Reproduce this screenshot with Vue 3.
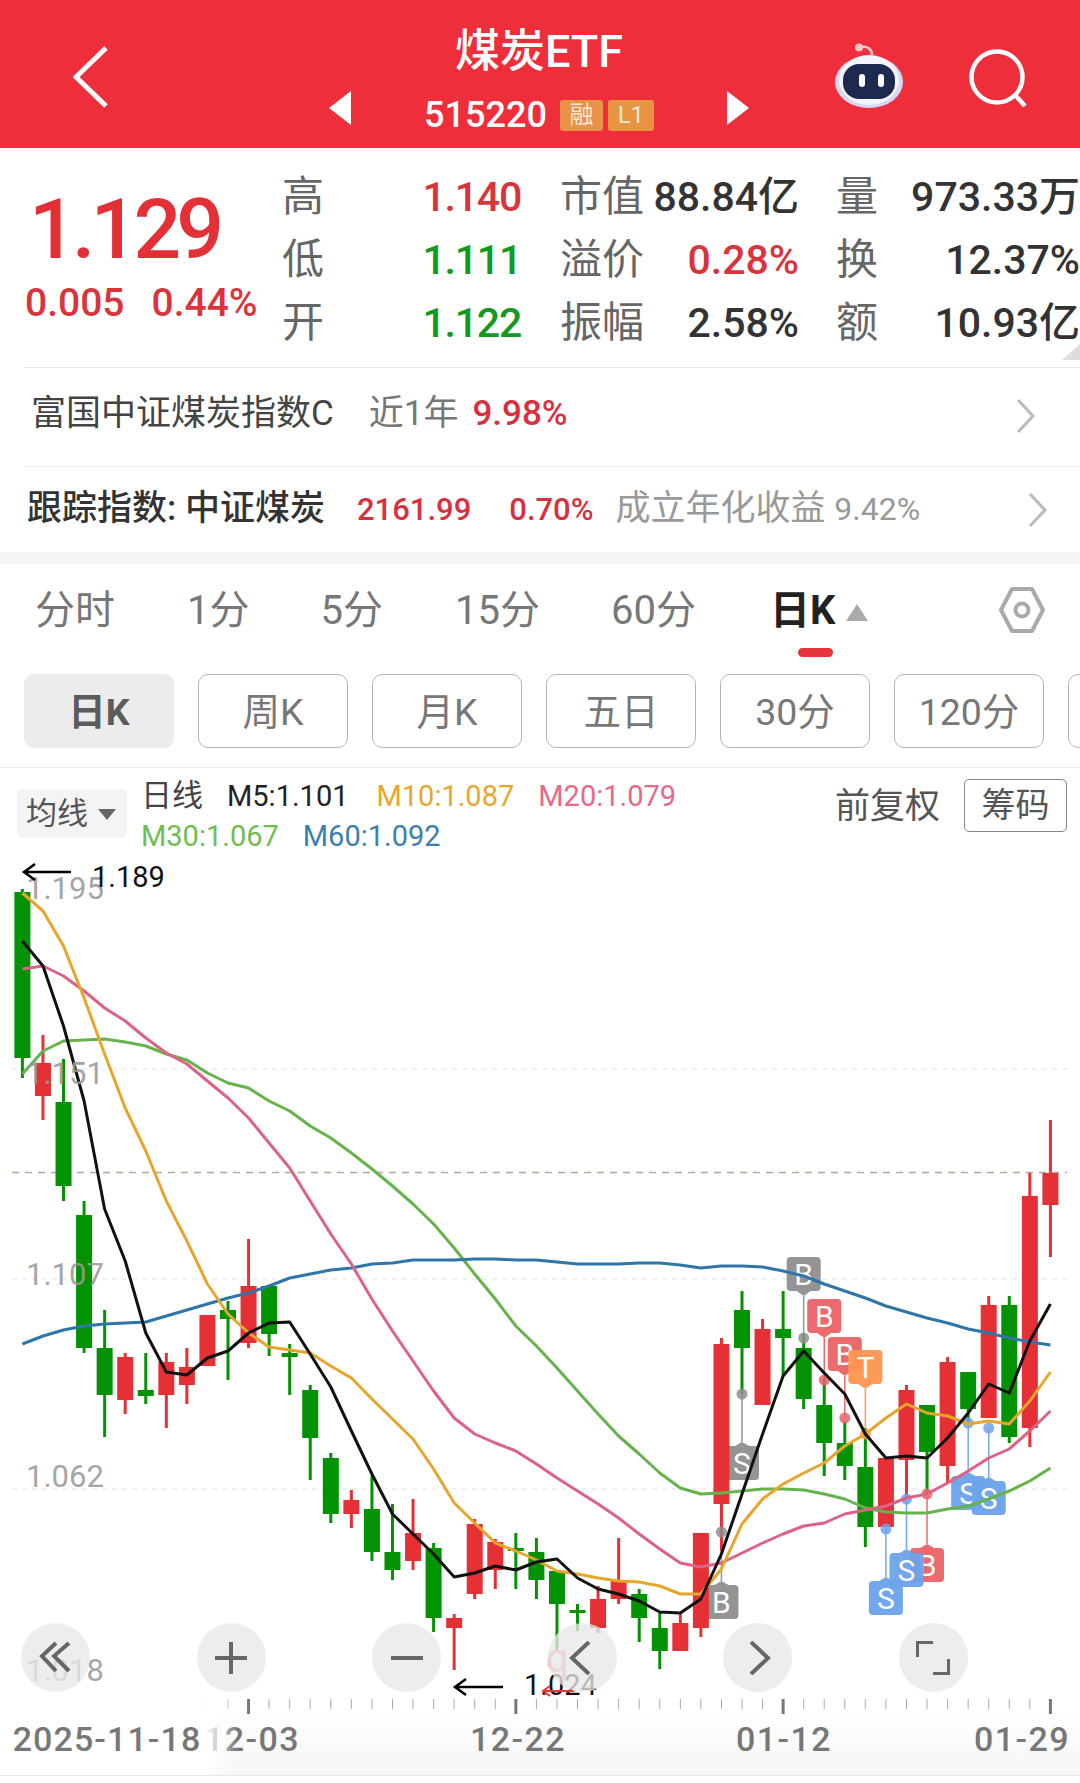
<script setup>
const stats = [
  ['高', '1.140', 'up', '市值', '88.84亿', '', '量', '973.33万', ''],
  ['低', '1.111', 'down', '溢价', '0.28%', 'up', '换', '12.37%', ''],
  ['开', '1.122', 'down', '振幅', '2.58%', '', '额', '10.93亿', '']
]
const tabs = ['分时', '1分', '5分', '15分', '60分']
const periods = ['周K', '月K', '五日', '30分', '120分', '']

// y coordinates are page pixels, the svg starts at 859
const top = 859
const step = 20.56
const xAt = (i) => 22.4 + step * i

// [red?, body top, body bottom, wick top, wick bottom]
const raw = [
  [0, 891, 1057, 888, 1077], [1, 1062, 1095, 1034, 1119], [0, 1101, 1185, 1058, 1200], [0, 1214, 1347, 1200, 1352],
  [0, 1347, 1394, 1309, 1436], [1, 1356, 1399, 1352, 1413], [0, 1389, 1395, 1352, 1403], [1, 1361, 1394, 1352, 1427],
  [1, 1366, 1384, 1347, 1403], [1, 1314, 1365, 1314, 1365], [0, 1309, 1318, 1300, 1379], [1, 1285, 1342, 1238, 1347],
  [0, 1285, 1333, 1285, 1355], [0, 1352, 1356, 1343, 1394], [0, 1389, 1437, 1384, 1479], [0, 1457, 1513, 1452, 1522],
  [1, 1499, 1513, 1489, 1527], [0, 1508, 1551, 1475, 1560], [0, 1551, 1569, 1503, 1579], [1, 1532, 1560, 1498, 1569],
  [0, 1547, 1617, 1542, 1631], [1, 1617, 1627, 1613, 1669], [1, 1523, 1593, 1518, 1598], [1, 1541, 1569, 1538, 1588],
  [0, 1547, 1550, 1532, 1588], [0, 1551, 1579, 1537, 1598], [0, 1570, 1603, 1570, 1650], [0, 1609, 1612, 1603, 1630],
  [1, 1598, 1627, 1585, 1632], [1, 1580, 1598, 1537, 1603], [0, 1593, 1617, 1588, 1641], [0, 1627, 1650, 1612, 1668],
  [1, 1622, 1650, 1612, 1650], [1, 1532, 1627, 1532, 1636], [1, 1343, 1503, 1337, 1550], [0, 1309, 1347, 1290, 1393],
  [1, 1328, 1404, 1318, 1404], [0, 1328, 1337, 1290, 1375], [0, 1347, 1398, 1333, 1408], [0, 1404, 1442, 1377, 1475],
  [0, 1442, 1465, 1420, 1479], [0, 1466, 1526, 1427, 1546], [1, 1457, 1526, 1457, 1526], [1, 1389, 1459, 1384, 1497],
  [0, 1404, 1451, 1404, 1493], [1, 1361, 1465, 1356, 1482], [0, 1371, 1408, 1371, 1422], [1, 1304, 1417, 1295, 1417],
  [0, 1304, 1436, 1295, 1442], [1, 1195, 1427, 1172, 1446], [1, 1172, 1204, 1119, 1256]
]
const candles = raw.map((c, i) => ({
  x: xAt(i),
  color: c[0] ? '#e53035' : '#039203',
  y: c[1] - top,
  h: c[2] - c[1],
  w1: c[3] - top,
  w2: c[4] - top
}))

const m5 = [940, 965, 1025, 1100, 1208, 1260, 1332, 1371, 1374, 1357, 1350, 1332, 1322, 1321, 1353, 1386, 1430, 1473, 1513, 1533, 1553, 1576, 1572, 1565, 1569, 1561, 1558, 1577, 1588, 1593, 1600, 1611, 1612, 1598, 1553, 1493, 1433, 1375, 1350, 1372, 1393, 1433, 1457, 1455, 1457, 1437, 1412, 1383, 1392, 1340, 1303]
const m10 = [892, 910, 945, 997, 1053, 1107, 1150, 1200, 1240, 1283, 1313, 1332, 1346, 1349, 1352, 1365, 1377, 1398, 1418, 1438, 1468, 1502, 1522, 1542, 1550, 1559, 1570, 1573, 1577, 1580, 1581, 1585, 1593, 1593, 1568, 1523, 1498, 1483, 1472, 1462, 1445, 1433, 1417, 1403, 1412, 1415, 1423, 1420, 1423, 1400, 1371]
const m20 = [968, 965, 975, 990, 1007, 1020, 1037, 1052, 1063, 1080, 1097, 1117, 1142, 1167, 1200, 1233, 1263, 1298, 1330, 1360, 1390, 1417, 1433, 1442, 1450, 1463, 1477, 1490, 1503, 1517, 1533, 1548, 1562, 1566, 1562, 1552, 1542, 1533, 1525, 1522, 1513, 1509, 1505, 1497, 1493, 1482, 1470, 1457, 1448, 1430, 1410]
const m30 = [1073, 1050, 1040, 1039, 1038, 1041, 1045, 1053, 1059, 1072, 1082, 1087, 1100, 1110, 1125, 1137, 1152, 1168, 1185, 1203, 1223, 1247, 1273, 1298, 1325, 1345, 1367, 1390, 1413, 1435, 1453, 1472, 1487, 1493, 1492, 1490, 1488, 1488, 1489, 1493, 1498, 1507, 1511, 1512, 1512, 1508, 1505, 1498, 1490, 1480, 1467]
const m60 = [1343, 1335, 1329, 1325, 1323, 1322, 1321, 1315, 1309, 1303, 1297, 1292, 1285, 1277, 1273, 1269, 1267, 1263, 1262, 1259, 1259, 1259, 1258, 1258, 1259, 1259, 1261, 1263, 1263, 1263, 1262, 1262, 1264, 1267, 1265, 1265, 1266, 1270, 1275, 1283, 1290, 1297, 1305, 1311, 1317, 1322, 1328, 1332, 1337, 1341, 1344]
const pts = (arr) => arr.map((y, i) => `${xAt(i).toFixed(1)},${y - top}`).join(' ')
const lines = [
  { c: '#66b34c', p: pts(m30) },
  { c: '#2f76a8', p: pts(m60) },
  { c: '#dd6288', p: pts(m20) },
  { c: '#e8a52c', p: pts(m10) },
  { c: '#111', p: pts(m5) }
]

const grid = [1068, 1278, 1488]
const priceLabels = [['1.195', 898], ['1.151', 1083], ['1.107', 1284], ['1.062', 1486], ['1.018', 1680]]

// dir 1: box above the dot, dir -1: box below the dot
const GREY = '#8f8f8f'
const RED = '#ea6367'
const ORANGE = '#ff9550'
const BLUE = '#6ba3ec'
const marks = [
  { i: 34, t: 'B', c: GREY, box: 1584, dot: 1531, dir: -1 },
  { i: 35, t: 'S', c: GREY, box: 1445, dot: 1393, dir: -1 },
  { i: 38, t: 'B', c: GREY, box: 1256, dot: 1337, dir: 1 },
  { i: 39, t: 'B', c: RED, box: 1298, dot: 1379, dir: 1 },
  { i: 40, t: 'B', c: RED, box: 1336, dot: 1417, dir: 1 },
  { i: 41, t: 'T', c: ORANGE, box: 1349, dot: 1433, dir: 1 },
  { i: 44, t: 'B', c: RED, box: 1547, dot: 1493, dir: -1 },
  { i: 43, t: 'S', c: BLUE, box: 1552, dot: 1498, dir: -1 },
  { i: 42, t: 'S', c: BLUE, box: 1580, dot: 1528, dir: -1 },
  { i: 46, t: 'S', c: BLUE, box: 1475, dot: 1422, dir: -1 },
  { i: 47, t: 'S', c: BLUE, box: 1480, dot: 1427, dir: -1 }
].map((m) => {
  const x = xAt(m.i)
  const y = m.box - top
  const tip = m.dir > 0 ? y + 39 : y - 4
  const foot = m.dir > 0 ? y + 34 : y
  return {
    ...m,
    x,
    y,
    dotY: m.dot - top,
    lineFrom: tip,
    arrow: `${x - 7},${foot} ${x},${tip} ${x + 7},${foot}`
  }
})

const ticks = raw.map((c, i) => ({ x: xAt(i), major: i === 11 || i === 24 || i === 37 || i === 50 }))
</script>

<template>
  <div class="page">
    <header class="head">
      <svg class="back" viewBox="0 0 36 62"><path d="M33 2 3 31l30 29" /></svg>
      <div class="title-wrap">
        <i class="tri tri-left"></i>
        <div class="title">
          <div class="name">煤炭ETF</div>
          <div class="code">
            <span>515220</span>
            <b class="tag">融</b>
            <b class="tag tag-l">L1</b>
          </div>
        </div>
        <i class="tri tri-right"></i>
      </div>
      <svg class="robot" viewBox="0 0 70 66">
        <path d="M38 12c0-6-5-9-10-8" fill="none" stroke="#f3c3c8" stroke-width="2.5" />
        <circle cx="25" cy="4.5" r="4" fill="#f3c3c8" />
        <ellipse cx="35" cy="39" rx="34" ry="26" fill="#d5d9f6" />
        <ellipse cx="35" cy="37" rx="30" ry="25" fill="#f4f4fd" />
        <rect x="9" y="21" width="52" height="35" rx="16" fill="#1c2a50" />
        <rect x="25" y="31" width="6" height="13" rx="3" fill="#fff" />
        <rect x="44" y="31" width="6" height="13" rx="3" fill="#fff" />
      </svg>
      <svg class="search" viewBox="0 0 58 58"><circle cx="28" cy="28" r="25.5" /><path d="M47 47l9 10" /></svg>
    </header>

    <section class="quote">
      <div class="price">
        <div class="big">1.129</div>
        <div class="chg"><span>0.005</span><span>0.44%</span></div>
      </div>
      <div class="stats">
        <template v-for="row in stats" :key="row[0]">
          <span class="lab">{{ row[0] }}</span>
          <span class="val first-val" :class="row[2]">{{ row[1] }}</span>
          <span class="lab">{{ row[3] }}</span>
          <span class="val" :class="row[5]">{{ row[4] }}</span>
          <span class="lab">{{ row[6] }}</span>
          <span class="val" :class="row[8]">{{ row[7] }}</span>
        </template>
      </div>
      <i class="corner"></i>
    </section>

    <div class="info first">
      <span class="fund">富国中证煤炭指数C</span>
      <span class="near">近1年</span>
      <span class="pct">9.98%</span>
      <svg class="chev" viewBox="0 0 20 34"><path d="M2 1l15 16L2 33" /></svg>
    </div>
    <div class="info second">
      <span class="track">跟踪指数: 中证煤炭</span>
      <span class="idx">2161.99</span>
      <span class="idx idx2">0.70%</span>
      <span class="since">成立年化收益 <em>9.42%</em></span>
      <svg class="chev" viewBox="0 0 20 34"><path d="M2 1l15 16L2 33" /></svg>
    </div>
    <div class="band"></div>

    <nav class="tabs">
      <span v-for="t in tabs" :key="t" class="tab">{{ t }}</span>
      <span class="tab on">日K<i></i></span>
      <svg class="gear" viewBox="0 0 46 46">
        <path d="M13 2h20l11 21-11 21H13L2 23z" />
        <circle cx="23" cy="23" r="6.5" />
      </svg>
    </nav>

    <div class="periods">
      <span class="period active">日K</span>
      <span v-for="(p, n) in periods" :key="n" class="period">{{ p }}</span>
    </div>

    <div class="legend">
      <div class="chip">均线<i></i></div>
      <div class="ma">
        <div>
          <span class="ma-t">日线</span><span class="c5">M5:1.101</span><span class="c10">M10:1.087</span><span class="c20">M20:1.079</span>
        </div>
        <div><span class="c30">M30:1.067</span><span class="c60">M60:1.092</span></div>
      </div>
      <span class="adj">前复权</span>
      <span class="chou">筹码</span>
    </div>

    <div class="chart">
      <svg class="plot" width="1080" height="839" viewBox="0 0 1080 839">
        <line v-for="g in grid" :key="g" x1="12" x2="1067" :y1="g - top" :y2="g - top" class="grid" />
        <line x1="12" x2="1067" y1="312.5" y2="312.5" class="now" />

        <g v-for="m in marks" :key="m.i" class="mark">
          <line :x1="m.x" :x2="m.x" :y1="m.lineFrom" :y2="m.dotY" :stroke="m.c" stroke-width="1.5" />
          <rect :x="m.x - 17" :y="m.y" width="34" height="34" rx="4" :fill="m.c" />
          <polygon :points="m.arrow" :fill="m.c" />
          <text :x="m.x" :y="m.y + 28" class="mt">{{ m.t }}</text>
        </g>

        <g v-for="(c, n) in candles" :key="n">
          <rect :x="c.x - 1.5" :y="c.w1" width="3" :height="c.w2 - c.w1" :fill="c.color" />
          <rect :x="c.x - 8" :y="c.y" width="16" :height="c.h" :fill="c.color" />
        </g>
        <circle v-for="m in marks" :key="'d' + m.i" :cx="m.x" :cy="m.dotY" r="5.5" :fill="m.c" opacity=".85" />

        <polyline v-for="l in lines" :key="l.c" :points="l.p" fill="none" :stroke="l.c" stroke-width="3" stroke-linejoin="round" />

        <text v-for="l in priceLabels" :key="l[0]" x="26" :y="l[1] - top" class="pl">{{ l[0] }}</text>

        <path d="M71 12H24m11-8-11 8 11 8" class="arr" />
        <text x="92" y="27" class="ext">1.189</text>
        <path d="M503 827h-48m11-8-11 8 11 8" class="arr" />
        <text x="524" y="835" class="ext">1.024</text>
        <text x="546" y="812" class="ghost">q</text>
        <path d="M574 831h-31m7-5-7 5 7 5" class="ghost-arr" />
      </svg>

      <div class="tools">
        <button class="tool"><svg viewBox="0 0 34 34"><path d="M17 2 3 15l14 15M30 2 15 15l15 15" /></svg></button>
        <button class="tool"><svg viewBox="0 0 34 34"><path d="M17 1v32M1 17h32" /></svg></button>
        <button class="tool"><svg viewBox="0 0 34 34"><path d="M1 17h32" /></svg></button>
        <button class="tool"><svg viewBox="0 0 34 34"><path d="M24 1 7 17l17 16" /></svg></button>
        <button class="tool"><svg viewBox="0 0 34 34"><path d="M10 1l17 16-17 16" /></svg></button>
        <button class="tool"><svg viewBox="0 0 34 34"><path d="M17 1H1v15M33 18v15H17" /></svg></button>
      </div>
    </div>

    <svg class="axis" width="1080" height="76" viewBox="0 0 1080 76">
      <defs>
        <linearGradient id="fade">
          <stop offset="0" stop-color="#fff" />
          <stop offset=".86" stop-color="#fff" />
          <stop offset="1" stop-color="#fff" stop-opacity="0" />
        </linearGradient>
      </defs>
      <rect v-for="t in ticks" :key="t.x" :x="t.x - (t.major ? 1.5 : .5)" y="0" :width="t.major ? 3 : 1" :height="t.major ? 15 : 10" :fill="t.major ? '#777' : '#aaa'" />
      <text x="252" y="52" class="dt">12-03</text>
      <text x="518" y="52" class="dt">12-22</text>
      <text x="784" y="52" class="dt">01-12</text>
      <text x="1022" y="52" class="dt">01-29</text>
      <rect x="0" y="0" width="238" height="76" fill="url(#fade)" />
      <text x="107" y="52" class="dt first-date">2025-11-18</text>
    </svg>
    <div class="foot"></div>
  </div>
</template>

<style scoped>
.page {
  width: 1080px;
  height: 1783px;
  overflow: hidden;
  background: #fff;
  font-family: Roboto, "Noto Sans CJK SC", sans-serif;
  color: #333;
}
i, em {
  font-style: normal;
}

.head {
  height: 148px;
  background: #ee2f3b;
  color: #fff;
  display: flex;
  align-items: flex-start;
  position: relative;
}
.back {
  width: 36px;
  height: 62px;
  margin: 46px 0 0 73px;
  fill: none;
  stroke: #fff;
  stroke-width: 5;
}
.title-wrap {
  display: flex;
  align-items: center;
  width: 420px;
  margin: 0 0 0 220px;
  justify-content: space-between;
}
.tri {
  width: 0;
  height: 0;
  border-top: 17px solid transparent;
  border-bottom: 17px solid transparent;
  margin-top: 78px;
}
.tri-left {
  border-right: 22px solid #fff;
}
.tri-right {
  border-left: 22px solid #fff;
}
.title {
  text-align: center;
  padding-top: 24px;
}
.name {
  font-size: 45px;
  font-weight: 500;
  line-height: 56px;
}
.code {
  display: flex;
  align-items: center;
  gap: 5px;
  font-size: 36px;
  font-weight: 500;
  line-height: 44px;
  margin-top: 13px;
}
.code span {
  margin-right: 8px;
}
.tag {
  width: 43px;
  height: 31px;
  line-height: 31px;
  font-size: 24px;
  font-weight: 400;
  background: #e8924a;
  border-radius: 3px;
  text-align: center;
  color: #fbe9d6;
}
.tag-l {
  width: 46px;
  background: #e99440;
}
.robot {
  width: 70px;
  height: 66px;
  margin: 43px 0 0 85px;
}
.search {
  width: 58px;
  height: 58px;
  margin: 49px 0 0 65px;
  fill: none;
  stroke: #fff;
  stroke-width: 4.5;
}

.quote {
  display: flex;
  height: 219px;
  position: relative;
}
.price {
  width: 282px;
  padding: 40px 0 0 25px;
  box-sizing: border-box;
}
.big {
  font-size: 84px;
  font-weight: 500;
  line-height: 84px;
  color: #e32f36;
  letter-spacing: -4.8px;
  margin-left: 4px;
}
.chg {
  display: flex;
  gap: 27px;
  margin-top: 9px;
  font-size: 39px;
  font-weight: 500;
  line-height: 44px;
  color: #d9343c;
}
.stats {
  display: grid;
  grid-template-columns: 40px 199px 123px 155px 79px 202px;
  grid-auto-rows: 63px;
  margin-top: 14px;
  align-items: baseline;
}
.lab {
  font-size: 42px;
  color: #666;
  text-align: right;
  white-space: nowrap;
}
.val {
  font-size: 41px;
  font-weight: 500;
  color: #333;
  text-align: right;
  white-space: nowrap;
}
.first-val {
  letter-spacing: -1.2px;
}
.val.up {
  color: #d9343c;
}
.val.down {
  color: #129a1e;
}
.corner {
  position: absolute;
  right: 0;
  top: 196px;
  border-left: 18px solid transparent;
  border-bottom: 16px solid #ddd;
}

.info {
  display: flex;
  align-items: baseline;
  position: relative;
  margin-left: 24px;
  box-sizing: border-box;
  line-height: 44px;
}
.info.first {
  height: 99px;
  border-top: 1px solid #e6e6e6;
  padding: 24px 0 0 7px;
}
.info.second {
  height: 86px;
  border-top: 1px solid #f2f2f2;
  padding: 20px 0 0 3px;
}
.fund {
  font-size: 35px;
  color: #444;
}
.near {
  font-size: 35px;
  color: #777;
  margin-left: 35px;
}
.pct {
  font-size: 35px;
  font-weight: 500;
  color: #d8303f;
  margin-left: 14px;
}
.track {
  font-size: 35px;
  font-weight: 500;
  color: #333;
}
.idx {
  font-size: 31px;
  font-weight: 500;
  color: #d8303f;
  margin-left: 32px;
}
.idx2 {
  margin-left: 38px;
}
.since {
  font-size: 35px;
  color: #999;
  margin-left: 22px;
}
.since em {
  font-size: 32px;
}
.chev {
  position: absolute;
  right: 44px;
  top: 31px;
  width: 20px;
  height: 34px;
  fill: none;
  stroke: #bbb;
  stroke-width: 3;
}
.second .chev {
  right: 32px;
  top: 26px;
}

.band {
  height: 12px;
  background: #f5f5f5;
}

.tabs {
  height: 110px;
  display: flex;
  align-items: center;
  position: relative;
  font-size: 40px;
  color: #777;
}
.tab {
  white-space: nowrap;
  line-height: 44px;
  margin-top: -16px;
}
.tab:nth-child(1) {
  margin-left: 35px;
}
.tab:nth-child(2) {
  margin-left: 72px;
}
.tab:nth-child(3) {
  margin-left: 71px;
}
.tab:nth-child(4) {
  margin-left: 72px;
}
.tab:nth-child(5) {
  margin-left: 71px;
}
.tab.on {
  margin-left: 74px;
  color: #222;
  font-weight: 700;
  position: relative;
}
.tab.on i {
  position: absolute;
  left: 28px;
  top: 59px;
  width: 35px;
  height: 9px;
  border-radius: 5px;
  background: #e5343c;
}
.tab.on::after {
  content: "";
  position: absolute;
  left: 76px;
  top: 15px;
  border-left: 11px solid transparent;
  border-right: 11px solid transparent;
  border-bottom: 17px solid #aaa;
}
.gear {
  position: absolute;
  left: 999px;
  top: 23px;
  width: 46px;
  height: 46px;
  fill: none;
  stroke: #aaa;
  stroke-width: 4;
  stroke-linejoin: round;
}

.periods {
  display: flex;
  gap: 24px;
  padding-left: 24px;
  height: 75px;
  overflow: hidden;
}
.period {
  flex: 0 0 150px;
  height: 74px;
  line-height: 75px;
  box-sizing: border-box;
  border: 1px solid #b5b5b5;
  border-radius: 10px;
  text-align: center;
  font-size: 37.5px;
  color: #777;
}
.period.active {
  background: #ececec;
  border-color: #ececec;
  font-weight: 700;
  color: #5c5c5c;
}

.legend {
  margin-top: 18px;
  height: 92px;
  border-top: 1px solid #eee;
  display: flex;
  align-items: flex-start;
  position: relative;
}
.chip {
  width: 110px;
  height: 49px;
  margin: 21px 0 0 17px;
  background: #f4f4f4;
  border-radius: 5px;
  font-size: 31px;
  line-height: 49px;
  color: #555;
  padding-left: 9px;
  box-sizing: border-box;
  position: relative;
}
.chip i {
  position: absolute;
  left: 81px;
  top: 20px;
  border-left: 9px solid transparent;
  border-right: 9px solid transparent;
  border-top: 11px solid #666;
}
.ma {
  margin: 8px 0 0 14px;
  font-size: 29px;
  line-height: 40px;
  white-space: nowrap;
}
.ma span {
  margin-right: 24px;
}
.ma .c5 {
  margin-right: 28px;
}
.ma-t {
  color: #444;
  font-size: 31px;
}
.c5 {
  color: #222;
}
.c10 {
  color: #e6a82a;
}
.c20 {
  color: #e8688a;
}
.c30 {
  color: #6fbf4f;
}
.c60 {
  color: #3b7fb0;
}
.adj {
  position: absolute;
  left: 835px;
  top: 17px;
  font-size: 35px;
  line-height: 44px;
  color: #555;
}
.chou {
  position: absolute;
  left: 964px;
  top: 11px;
  width: 103px;
  height: 53px;
  line-height: 51px;
  box-sizing: border-box;
  border: 1px solid #888;
  border-radius: 5px;
  text-align: center;
  font-size: 34px;
  color: #555;
}

.chart {
  position: relative;
  height: 839px;
}
.plot {
  display: block;
}
.grid {
  stroke: #e4e4e4;
  stroke-width: 1;
  stroke-dasharray: 5 5;
}
.now {
  stroke: #b5a898;
  stroke-width: 1.5;
  stroke-dasharray: 7 6;
}
.pl {
  font-size: 31px;
  fill: #999;
  fill-opacity: .9;
}
.mt {
  font-size: 30px;
  fill: #fff;
  text-anchor: middle;
}
.mark {
  opacity: .95;
}
.arr {
  fill: none;
  stroke: #000;
  stroke-width: 2.5;
}
.ext {
  font-size: 29px;
  fill: #111;
}
.ghost {
  font-size: 40px;
  fill: #e99;
}
.ghost-arr {
  fill: none;
  stroke: #e33;
  stroke-width: 2;
}
.tools {
  position: absolute;
  left: 21px;
  right: 112px;
  top: 763px;
  display: flex;
  justify-content: space-between;
}
.tool {
  width: 69px;
  height: 69px;
  padding: 0;
  border: 0;
  border-radius: 50%;
  background: rgba(232, 232, 232, .78);
  display: flex;
  align-items: center;
  justify-content: center;
}
.tool svg {
  width: 34px;
  height: 34px;
  fill: none;
  stroke: #666;
  stroke-width: 4;
}

.axis {
  display: block;
  background: linear-gradient(#fff 10%, #f6f6f6);
}
.dt {
  font-size: 34px;
  font-weight: 500;
  letter-spacing: 1.4px;
  fill: #777;
  text-anchor: middle;
}
.first-date {
  letter-spacing: 1.1px;
}
.foot {
  height: 9px;
  border-top: 1px solid #e8e8e8;
}
</style>

<style>
body {
  background: #fff;
}
</style>
